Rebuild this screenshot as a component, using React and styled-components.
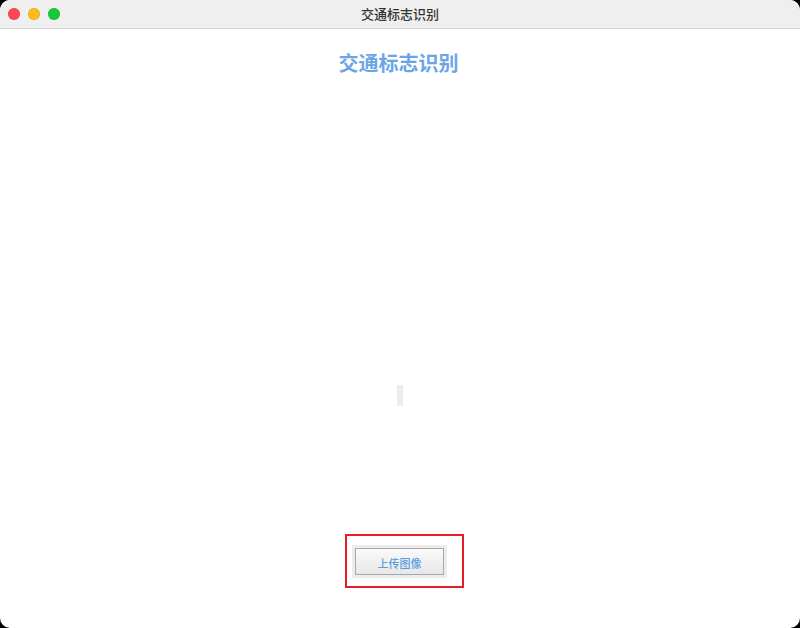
import React from 'react';
import styled, { createGlobalStyle } from 'styled-components';

const GlobalStyle = createGlobalStyle`
  html, body {
    margin: 0;
    padding: 0;
    background: #000;
    font-family: "Noto Sans CJK SC", "Liberation Sans", sans-serif;
  }
  #root {
    width: 800px;
    height: 628px;
  }
`;

const Window = styled.div`
  width: 800px;
  height: 628px;
  background: #fff;
  border-radius: 10px;
  overflow: hidden;
  display: flex;
  flex-direction: column;
`;

const TitleBar = styled.div`
  height: 28px;
  flex-shrink: 0;
  background: #efefef;
  border-bottom: 1px solid #d6d6d6;
  display: flex;
  align-items: center;
  position: relative;
`;

const Lights = styled.div`
  display: flex;
  gap: 8px;
  padding-left: 8px;
  position: absolute;
  left: 0;
  top: 8px;
`;

const Light = styled.span`
  width: 12px;
  height: 12px;
  border-radius: 50%;
  background: ${p => p.$color};
  box-shadow: inset 0 0 0 0.5px rgba(0, 0, 0, 0.15);
`;

const WindowTitle = styled.div`
  flex: 1;
  text-align: center;
  font-size: 13px;
  font-weight: 500;
  color: #333;
  line-height: 28px;
`;

const Content = styled.div`
  flex: 1;
  display: flex;
  flex-direction: column;
  align-items: center;
  padding-top: 20px;
`;

const Heading = styled.h1`
  margin: 0;
  font-size: 20px;
  line-height: 28px;
  font-weight: bold;
  color: #6aa6e6;
  padding-right: 3px;
`;

const ImageArea = styled.div`
  height: 457px;
  align-self: stretch;
  display: flex;
  justify-content: center;
  align-items: flex-start;
  padding-top: 308px;
  box-sizing: border-box;
`;

const Placeholder = styled.div`
  width: 6px;
  height: 21px;
  background: #ececec;
`;

const FrameRow = styled.div`
  align-self: stretch;
  display: flex;
  justify-content: center;
  padding-left: 9px;
`;

const Frame = styled.div`
  width: 119px;
  height: 54px;
  box-sizing: border-box;
  border: 2px solid #e61e2a;
  padding: 9px 0 0 5px;
`;

const ButtonWell = styled.div`
  width: 95px;
  height: 33px;
  background: #ececec;
  padding: 3px;
  box-sizing: border-box;
`;

const UploadButton = styled.button`
  width: 89px;
  height: 27px;
  box-sizing: border-box;
  border: 1px solid #a8a8a8;
  background: linear-gradient(#fafafa, #e7e7e7);
  color: #5a9de2;
  font-family: "Noto Sans CJK SC", sans-serif;
  font-size: 11px;
  font-weight: 500;
  padding: 2px 0 0;
  margin: 0;
  cursor: pointer;
`;

export default function App() {
  return (
    <>
      <GlobalStyle />
      <Window>
        <TitleBar>
          <Lights>
            <Light $color="#fe4556" />
            <Light $color="#fdbb18" />
            <Light $color="#16c83a" />
          </Lights>
          <WindowTitle>交通标志识别</WindowTitle>
        </TitleBar>
        <Content>
          <Heading>交通标志识别</Heading>
          <ImageArea>
            <Placeholder />
          </ImageArea>
          <FrameRow>
            <Frame>
              <ButtonWell>
                <UploadButton>上传图像</UploadButton>
              </ButtonWell>
            </Frame>
          </FrameRow>
        </Content>
      </Window>
    </>
  );
}
